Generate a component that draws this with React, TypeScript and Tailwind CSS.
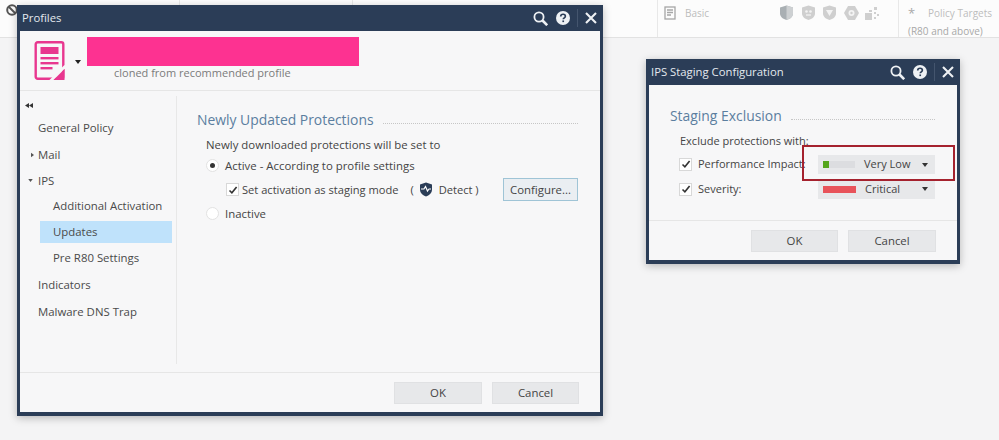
import React from "react";

const font = { fontFamily: '"Open Sans", "Noto Sans", sans-serif' };

function Search() {
  return (
    <svg viewBox="0 0 15 15" className="w-[15px] h-[15px]" fill="none" stroke="#eef1f4" strokeWidth="1.800">
      <circle cx="6" cy="6" r="4.600" />
      <path d="M9.500 9.500l4.700 4.700" strokeWidth="2.600" />
    </svg>
  );
}
function Help() {
  return (
    <svg viewBox="0 0 16 16" className="w-[14px] h-[14px]">
      <circle cx="8" cy="8" r="8" fill="#eef1f4" />
      <path d="M5.400 6.200c0-1.600 1.200-2.500 2.700-2.500s2.600.9 2.600 2.200c0 1.900-2.400 1.900-2.400 3.600" fill="none" stroke="#2b3d57" strokeWidth="1.900" />
      <rect x="7.300" y="10.800" width="1.900" height="1.900" fill="#2b3d57" />
    </svg>
  );
}
function Close() {
  return (
    <svg viewBox="0 0 12 12" className="w-[12px] h-[12px]" stroke="#eef1f4" strokeWidth="2.100">
      <path d="M1 1l10 10M11 1L1 11" />
    </svg>
  );
}
function TitleBar({ title }: { title: string }) {
  return (
    <div className="h-[26px] flex items-center pl-[2px] text-[#e4e9ee] text-[11.300px]">
      <span className="flex-1">{title}</span>
      <div className="flex items-center">
        <Search />
        <span className="ml-[8px] flex"><Help /></span>
        <span className="ml-[7px] h-[18px] w-px bg-[#44556e]" />
        <span className="ml-[7px] mr-[3px] flex"><Close /></span>
      </div>
    </div>
  );
}
function Check() {
  return (
    <span className="w-[13px] h-[13px] bg-white border border-[#d8d8d8] flex items-center justify-center shrink-0">
      <svg viewBox="0 0 10 10" className="w-[10px] h-[10px]" fill="none" stroke="#333" strokeWidth="1.600">
        <path d="M1.500 5.500l2.400 2.300L8.600 2" />
      </svg>
    </span>
  );
}
function Caret({ c = "#333" }: { c?: string }) {
  return (
    <svg viewBox="0 0 6 4" className="w-[6px] h-[4px]"><path d="M0 0h6L3 4z" fill={c} /></svg>
  );
}
function Heading({ text }: { text: string }) {
  return (
    <div className="flex items-end">
      <span className="text-[13.900px] text-[#5b7e9f] leading-none whitespace-nowrap">{text}</span>
      <span className="flex-1 ml-[9px] mb-[3px] border-b border-dotted border-[#c6c6c6]" />
    </div>
  );
}
function Btn({ label, w, h = "h-[22px]" }: { label: string; w: string; h?: string }) {
  return (
    <div className={`${w} ${h} bg-[#e7e8ea] border border-[#e0e1e3] flex items-center justify-center text-[11.400px] text-[#444]`}>
      {label}
    </div>
  );
}
function TopIcon() {
  return (
    <svg viewBox="0 0 12 14" className="w-[12px] h-[14px]" fill="none" stroke="#a6a6a6" strokeWidth="1.300">
      <rect x="1" y="1" width="10" height="12" />
      <path d="M3 4h6M3 6.500h6M3 9h4" />
    </svg>
  );
}
const shieldPath = "M7.500 0.500l6.500 2v6c0 3.500-3.200 5.500-6.500 6.500C4.200 14 1 12 1 8.500v-6z";
function ShieldA() {
  return (
    <svg viewBox="0 0 15 16" className="w-[15px] h-[16px]">
      <path d={shieldPath} fill="#a9afb3" />
      <path d="M7.500 0.500l6.500 2v6c0 3.500-3.200 5.500-6.500 6.500z" fill="#cdd0d2" />
    </svg>
  );
}
function ShieldB() {
  return (
    <svg viewBox="0 0 15 16" className="w-[15px] h-[16px]">
      <path d={shieldPath} fill="#cfcfcf" />
      <circle cx="5.500" cy="6.500" r="1.300" fill="#f3f3f3" />
      <circle cx="9.500" cy="6.500" r="1.300" fill="#f3f3f3" />
      <path d="M5 10h5" stroke="#f3f3f3" strokeWidth="1.300" />
    </svg>
  );
}
function ShieldC() {
  return (
    <svg viewBox="0 0 15 16" className="w-[15px] h-[16px]">
      <path d={shieldPath} fill="#cfcfcf" />
      <path d="M4 5h7L7.500 11z" fill="#f3f3f3" />
    </svg>
  );
}
function ShieldD() {
  return (
    <svg viewBox="0 0 15 16" className="w-[15px] h-[16px]">
      <path d="M4 1h7l4 7-4 7H4L0 8z" fill="#cfcfcf" />
      <circle cx="7.500" cy="8" r="3" fill="#f3f3f3" />
      <circle cx="7.500" cy="8" r="1.200" fill="#cfcfcf" />
    </svg>
  );
}
function Dots() {
  return (
    <svg viewBox="0 0 14 14" className="w-[14px] h-[14px]" fill="#cfcfcf">
      <path d="M0 7h7v7H0z" />
      <path d="M4 4h3v2H4z" />
      <rect x="9" y="1" width="3" height="3" />
      <rect x="9" y="6" width="2" height="2" />
      <rect x="12" y="8" width="2" height="2" />
      <rect x="9" y="11" width="2" height="2" />
    </svg>
  );
}

function Nav({ label, indent, arrow, active, mt }: { label: string; indent?: boolean; arrow?: "r" | "d"; active?: boolean; mt: string }) {
  return (
    <div className={`relative ${mt} h-[22px] flex items-center text-[11.400px] text-[#4a4a4a] ${indent ? "ml-[20px] pl-[13px]" : "pl-[18px]"} ${active ? "bg-[#bfe2fb] mr-[4px]" : ""}`}>
      {arrow === "r" && (
        <svg viewBox="0 0 4 6" className="absolute left-[11px] top-[8px] w-[3px] h-[6px]"><path d="M0 0l4 3-4 3z" fill="#555" /></svg>
      )}
      {arrow === "d" && (
        <svg viewBox="0 0 6 4" className="absolute left-[8px] top-[9px] w-[5px] h-[3px]"><path d="M0 0h6L3 4z" fill="#555" /></svg>
      )}
      {label}
    </div>
  );
}

export default function App() {
  return (
    <div className="relative w-[999px] h-[440px] overflow-hidden bg-[#f4f4f5]" style={font}>
      {/* background toolbar */}
      <div className="h-[38px] bg-[#fcfcfc] border-b border-[#e2e2e2] relative">
        <span className="absolute left-[179px] top-0 h-full w-px bg-[#e8e8e8]" />
        <span className="absolute left-[352px] top-0 h-full w-px bg-[#e8e8e8]" />
        <span className="absolute left-[657px] top-0 h-full w-px bg-[#e8e8e8]" />
        <span className="absolute left-[898px] top-0 h-full w-px bg-[#e8e8e8]" />
        <span className="absolute left-[664px] top-[6px]"><TopIcon /></span>
        <span className="absolute left-[685px] top-[6px] text-[10px] text-[#bdbdbd] leading-[15px]">Basic</span>
        <div className="absolute left-[779px] top-[5px] flex gap-[6.500px] items-center">
          <ShieldA /><ShieldB /><ShieldC /><ShieldD /><Dots />
        </div>
        <span className="absolute left-[908px] top-[6px] text-[13px] text-[#aaa] leading-[14px]">*</span>
        <span className="absolute left-[928px] top-[6px] text-[10px] text-[#bdbdbd] leading-[15px] whitespace-nowrap">Policy Targets</span>
        <span className="absolute left-[908px] top-[24px] text-[10px] text-[#a8a8a8] leading-[14px] whitespace-nowrap">(R80 and above)</span>
      </div>

      {/* no-entry icon */}
      <svg viewBox="0 0 12 12" className="absolute left-[6px] top-[4px] w-[12px] h-[12px]" fill="none" stroke="#555" strokeWidth="2">
        <circle cx="6" cy="6" r="4.800" />
        <path d="M2.500 2.500l7 7" />
      </svg>

      {/* Profiles window */}
      <div className="absolute left-[17px] top-[5px] w-[586px] h-[411px] bg-[#2b3d57] px-[3px] pb-[4px] flex flex-col shadow-[0_2px_8px_rgba(0,0,0,0.25)]">
        <TitleBar title="Profiles" />
        <div className="flex-1 bg-[#f7f7f8] flex flex-col min-h-0">
          <div className="h-[60px] border-b border-[#e6e6e6] relative shrink-0">
            <svg viewBox="0 0 30 39" className="absolute left-[14px] top-[10px] w-[31px] h-[39px]">
              <rect x="1.200" y="1.200" width="27.600" height="36.600" rx="2" fill="none" stroke="#e8378f" strokeWidth="2.400" />
              <rect x="6" y="6" width="18" height="7" fill="#e8378f" />
              <rect x="6" y="16" width="18" height="2.400" fill="#e8378f" />
              <rect x="6" y="21" width="18" height="2.400" fill="#e8378f" />
              <rect x="6" y="26" width="12" height="2.400" fill="#e8378f" />
              <path d="M16 40L31 25" stroke="#f7f7f8" strokeWidth="3" />
              <path d="M30 28v11H19z" fill="#e8378f" />
            </svg>
            <span className="absolute left-[55px] top-[29px] flex"><Caret c="#222" /></span>
            <div className="absolute left-[67px] top-[6px] w-[272px] h-[29px] bg-[#fd3291]" />
            <span className="absolute left-[94px] top-[34px] text-[11px] text-[#7b7b7b] leading-[16px] whitespace-nowrap">cloned from recommended profile</span>
          </div>

          <div className="flex-1 flex min-h-0">
            <div className="w-[157px] pt-[7px] border-r border-[#e8e8e8] mt-[5px] mb-[8px] shrink-0">
              <svg viewBox="0 0 8 5" className="ml-[5px] w-[8px] h-[5px]"><path d="M4 0v5L0 2.500zM8 0v5L4 2.500z" fill="#333" /></svg>
              <Nav label="General Policy" mt="mt-[9px]" />
              <Nav label="Mail" arrow="r" mt="mt-[5px]" />
              <Nav label="IPS" arrow="d" mt="mt-[4px]" />
              <Nav label="Additional Activation" indent mt="mt-[3px]" />
              <Nav label="Updates" indent active mt="mt-[4px]" />
              <Nav label="Pre R80 Settings" indent mt="mt-[4px]" />
              <Nav label="Indicators" mt="mt-[5px]" />
              <Nav label="Malware DNS Trap" mt="mt-[5px]" />
            </div>
            <div className="flex-1 pl-[20px] pr-[22px] pt-[22px]">
              <Heading text="Newly Updated Protections" />
              <div className="ml-[9px] mt-[10px] text-[11.400px] text-[#444] leading-[16px]">Newly downloaded protections will be set to</div>
              <div className="ml-[9px] mt-[5px] flex items-center text-[11.400px] text-[#444] leading-[16px]">
                <span className="w-[13px] h-[13px] rounded-full bg-white border border-[#e2e2e2] flex items-center justify-center">
                  <span className="w-[5px] h-[5px] rounded-full bg-[#333]" />
                </span>
                <span className="ml-[6px]">Active - According to profile settings</span>
              </div>
              <div className="ml-[29px] mt-[4px] flex items-center text-[11.100px] text-[#444] h-[24px]">
                <Check />
                <span className="ml-[3px] whitespace-nowrap">Set activation as staging mode</span>
                <span className="ml-[12px]">(</span>
                <svg viewBox="0 0 14 15" className="ml-[5px] w-[14px] h-[15px]">
                  <path d="M7 0.500l6 2v5c0 3.500-3 6-6 7-3-1-6-3.500-6-7v-5z" fill="#2b3d57" />
                  <path d="M2 7h3l1.500-2.500L8.500 9 10 7h2" fill="none" stroke="#fff" strokeWidth="1.200" />
                </svg>
                <span className="ml-[6px] whitespace-nowrap">Detect )</span>
                <div className="ml-auto w-[75px] h-[23px] bg-[#eaeef2] border border-[#9fc4d6] flex items-center justify-center text-[11.400px] text-[#444]">Configure...</div>
              </div>
              <div className="ml-[9px] mt-[4px] flex items-center text-[11.400px] text-[#444] leading-[16px]">
                <span className="w-[13px] h-[13px] rounded-full bg-white border border-[#e2e2e2]" />
                <span className="ml-[6px]">Inactive</span>
              </div>
            </div>
          </div>

          <div className="h-[40px] border-t border-[#e6e6e6] flex items-start justify-end gap-[10px] pt-[9px] pr-[21px] shrink-0">
            <Btn label="OK" w="w-[88px]" />
            <Btn label="Cancel" w="w-[87px]" />
          </div>
        </div>
      </div>

      {/* IPS Staging window */}
      <div className="absolute left-[646px] top-[59px] w-[314px] h-[205px] bg-[#2b3d57] px-[3px] pb-[4px] flex flex-col shadow-[0_2px_8px_rgba(0,0,0,0.25)]">
        <TitleBar title="IPS Staging Configuration" />
        <div className="flex-1 bg-[#f7f7f8] flex flex-col">
          <div className="flex-1 pl-[21px] pr-[22px] pt-[24px]">
            <Heading text="Staging Exclusion" />
            <div className="ml-[10px] mt-[10px] text-[11px] text-[#444] leading-[16px]">Exclude protections with:</div>
            <div className="ml-[9px] mt-[3px] h-[25px] flex items-center text-[11px] text-[#444]">
              <Check />
              <span className="ml-[6px] flex-1 whitespace-nowrap">Performance Impact:</span>
              <div className="w-[117px] h-[19px] bg-[#e7e8ea] flex items-center relative">
                <span className="ml-[5px] w-[6px] h-[7px] bg-[#55a51c]" />
                <span className="w-[26px] h-[7px] bg-[#dcdde0]" />
                <span className="ml-[9px]">Very Low</span>
                <span className="absolute right-[7px] top-[8px] flex"><Caret /></span>
              </div>
            </div>
            <div className="ml-[9px] h-[25px] flex items-center text-[11px] text-[#444]">
              <Check />
              <span className="ml-[6px] flex-1">Severity:</span>
              <div className="w-[117px] h-[20px] bg-[#e7e8ea] flex items-center relative">
                <span className="ml-[5px] w-[33px] h-[7px] bg-[#e8535a]" />
                <span className="ml-[9px]">Critical</span>
                <span className="absolute right-[7px] top-[8px] flex"><Caret /></span>
              </div>
            </div>
          </div>
          <div className="h-[40px] border-t border-[#e6e6e6] flex items-start justify-end gap-[10px] pt-[9px] pr-[21px]">
            <Btn label="OK" w="w-[87px]" />
            <Btn label="Cancel" w="w-[88px]" />
          </div>
        </div>
      </div>

      {/* red annotation */}
      <div className="absolute left-[802px] top-[145px] w-[153px] h-[36px] border-2 border-[#a5222e]" />
    </div>
  );
}
